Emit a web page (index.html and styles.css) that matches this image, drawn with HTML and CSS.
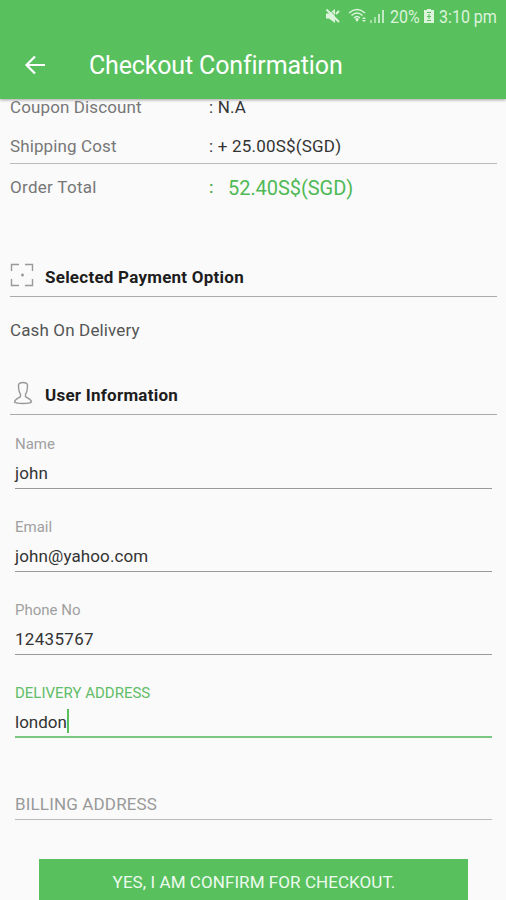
FILE: index.html
```html
<!DOCTYPE html>
<html lang="en">
<head>
<meta charset="utf-8">
<title>Checkout Confirmation</title>
<link rel="stylesheet" href="styles.css">
</head>
<body>
<div class="screen">
  <header class="header">
    <div class="status">
      <svg class="mute" width="16" height="16" viewBox="0 0 16 16"><path d="M1 5.500h3l6-4.500v14l-6-4.500H1z" fill="#dcf3dc"/><path d="M4 1l11 12" stroke="#58c15e" stroke-width="1"/><path d="M1.500 1.500l12.500 12.500M11 6l3-3" stroke="#dcf3dc" stroke-width="2" fill="none"/></svg>
      <svg class="wifi" width="20" height="16" viewBox="0 0 20 16" fill="none" stroke="#dcf3dc" stroke-width="1.500"><path d="M1 5q8-7 16 0M3.500 7.500q5.500-5 11 0M6 10q3-3 6 0"/><path d="M7 11q2-2 4 0l-2 3z" fill="#dcf3dc" stroke="none"/><path d="M14 11l2-2 2 2zM14 12l2 2 2-2z" fill="#dcf3dc" stroke="none"/></svg>
      <svg class="signal" width="15" height="16" viewBox="0 0 15 16" fill="#dcf3dc"><path d="M0 12h2v3H0zM4 9h2v6H4z" opacity=".6"/><path d="M8 6h2v9H8zM12 2h2v13h-2z" opacity=".8"/></svg>
      <span class="percent"><span>20%</span></span>
      <svg class="battery" width="12" height="16" viewBox="0 0 12 16"><path d="M4 1h4v1h3v13H1V2h3z" fill="#dcf3dc"/><path d="M4 4.500h4M4 12.500h4M6 6v5M4 8.500h4" fill="none" stroke="#58c15e" stroke-width="1"/></svg>
      <span class="clock"><span>3:10 pm</span></span>
    </div>
    <div class="toolbar">
      <svg class="back" width="22" height="22" viewBox="0 0 22 22" fill="none" stroke="#fff" stroke-width="2.200"><path d="M21 10H3M11 1.500L2.500 10l8.500 8.500"/></svg>
      <h1><span>Checkout Confirmation</span></h1>
    </div>
  </header>
  <main>
    <div class="row coupon"><span class="key k1">Coupon Discount</span><span class="value v1">: N.A</span></div>
    <div class="row shipping"><span class="key k2">Shipping Cost</span><span class="value v2">: + 25.00S$(SGD)</span></div>
    <div class="row total"><span class="key k3">Order Total</span><span class="colon">:</span><span class="amount">52.40S$(SGD)</span></div>
    <section class="payment">
      <h2><svg width="24" height="24" viewBox="0 0 24 24" fill="none" stroke="#999" stroke-width="1.400"><path d="M1.500 8V1.500H9M15 1.500h7.500V8M22.500 16v6.500H15M9 22.500H1.500V16"/><path d="M11 12h3M12.500 10.500v3"/></svg><span class="heading1">Selected Payment Option</span></h2>
      <p>Cash On Delivery</p>
    </section>
    <section class="user">
      <h2><svg width="24" height="24" viewBox="0 0 24 24" fill="none" stroke="#999" stroke-width="1.400"><path d="M10.500 15.500v-2.500C8.500 11 8.500 9 8.500 4Q9 1.500 13 1.500T17.500 4c0 5 0 7-2 9v2.500c1 1.500 5.500 2 6 5.500-2 2-15 2-17 0 .5-3.500 5-4 6-5.500z"/></svg><span class="heading2">User Information</span></h2>
    </section>
    <form>
      <div class="field"><label class="l1">Name</label><div class="input i1">john</div></div>
      <div class="field"><label class="l2">Email</label><div class="input i2">john@yahoo.com</div></div>
      <div class="field"><label class="l3">Phone No</label><div class="input i3">12435767</div></div>
      <div class="field active"><label class="l4">DELIVERY ADDRESS</label><div class="input i4">london<i class="caret"></i></div></div>
      <div class="billing"><span>BILLING ADDRESS</span></div>
      <div class="confirm"><span>YES, I AM CONFIRM FOR CHECKOUT.</span></div>
    </form>
  </main>
</div>
</body>
</html>
```
FILE: styles.css
```css
* { box-sizing: border-box; }
body { margin: 0; background: #fafafa; font-family: Roboto, sans-serif; color: #333; }
.screen { width: 506px; height: 900px; overflow: hidden; }
svg { display: block; flex: none; }
.header { height: 99px; background: #58c15e; color: #fff; box-shadow: 0 1px 3px rgba(0,0,0,.35); }
.status { height: 32px; display: flex; align-items: center; padding-left: 325px; color: #dcf3dc; font-size: 18px; white-space: nowrap; }
.wifi { margin-left: 7px; }
.signal { margin-left: 2px; }
.percent { width: 30px; margin-left: 5px; }
.battery { margin-left: 3px; }
.clock { width: 59px; margin-left: 4px; }
.percent span, .clock span { display: inline-block; transform: scaleX(.89); transform-origin: left; }
.toolbar { height: 67px; display: flex; align-items: center; padding-left: 24px; }
h1 { margin: 0 0 0 43px; font-size: 25px; line-height: 30px; font-weight: 400; letter-spacing: -.16px; }
.row { display: flex; margin: 0 9px 0 10px; font-size: 17px; white-space: nowrap; }
.key { width: 198px; color: #777; letter-spacing: .12px; }
.value { padding-left: 1px; letter-spacing: .2px; }
.coupon { height: 29px; line-height: 17px; }
.shipping { height: 36px; line-height: 37px; border-bottom: 1px solid #bbb; }
.total { height: 85px; line-height: 46px; }
.k3 { letter-spacing: .3px; }
.colon { width: 20px; padding-left: 1px; color: #4caf50; font-weight: 500; }
.amount { font-size: 20px; line-height: 49px; color: #4fb956; letter-spacing: -.05px; }
h2 { display: flex; align-items: center; height: 48px; margin: 0 9px 0 10px; padding-top: 9px; border-bottom: 1px solid #aaa; font-size: 17px; font-weight: 700; color: #1d1d1d; white-space: nowrap; letter-spacing: .24px; }
h2 svg { margin: -4px 11px 0 0; }
p { height: 70px; margin: 0; padding-left: 10px; line-height: 66px; font-size: 17px; color: #555; letter-spacing: .14px; }
form { padding: 16px 14px 0 15px; }
.field { height: 58px; margin-bottom: 25px; border-bottom: 1px solid #999; white-space: nowrap; }
label { display: block; height: 24px; line-height: 26px; font-size: 15px; color: #a0a0a0; }
.input { display: flex; align-items: center; height: 32px; padding-top: 3px; font-size: 17px; color: #333; letter-spacing: .12px; }
.i3 { letter-spacing: .3px; }
.i4 { letter-spacing: 0; }
.active { border-bottom: 2px solid #7cc881; }
.active label { color: #61bd67; }
.caret { width: 2px; height: 24px; margin-top: -1px; background: #58c15e; }
.billing { height: 57px; line-height: 83px; font-size: 17px; color: #999; border-bottom: 1px solid #bbb; letter-spacing: .15px; }
.confirm { height: 60px; margin: 39px 24px 0; padding-left: 1px; background: #58c15e; color: #edfaee; text-align: center; font-size: 17px; line-height: 46px; white-space: nowrap; letter-spacing: .07px; }
```
